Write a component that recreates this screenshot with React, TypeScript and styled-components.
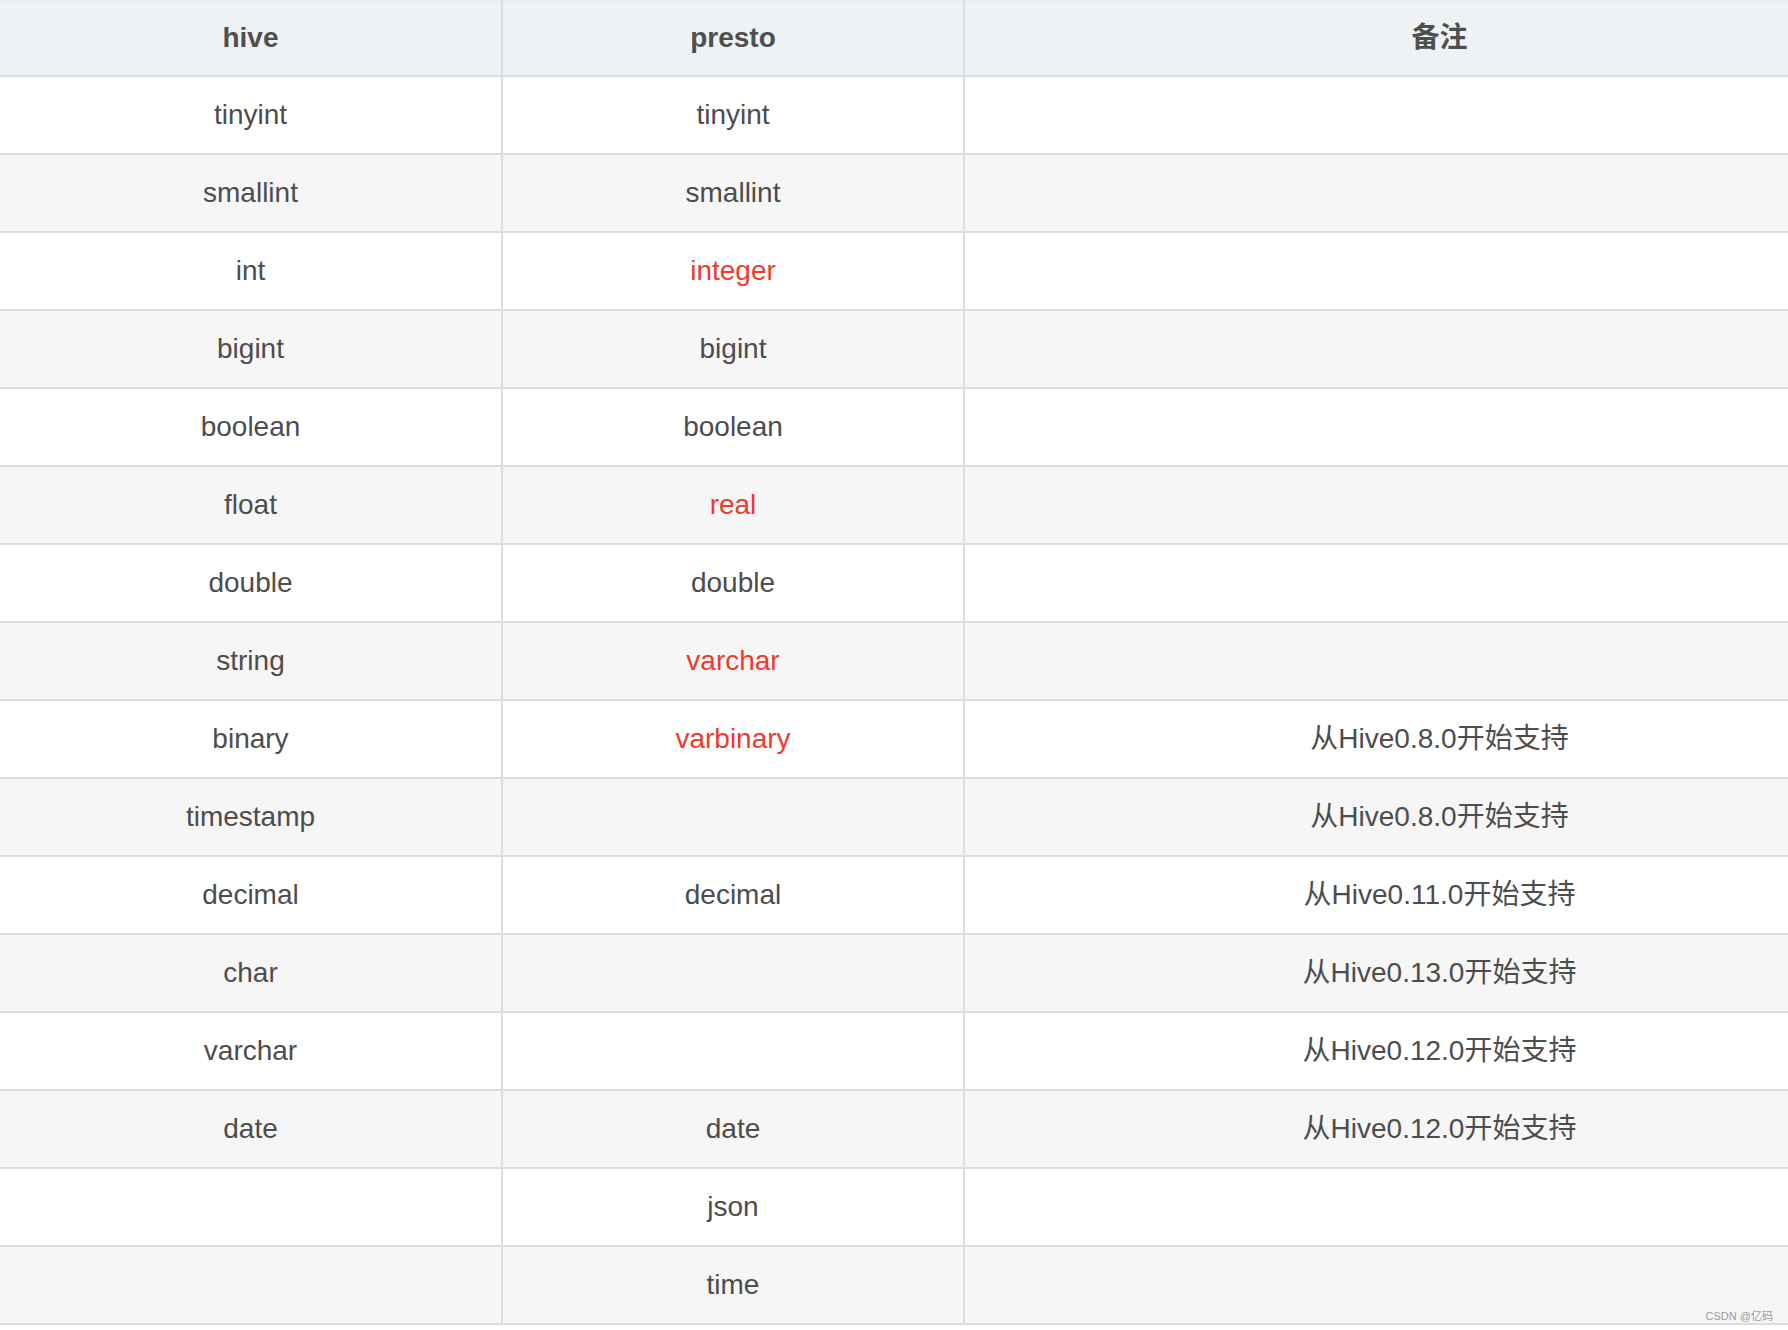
import React from "react";
import styled, { createGlobalStyle } from "styled-components";

const Global = createGlobalStyle`
  html, body { margin: 0; padding: 0; background: #fff; }
  body { font-family: "Liberation Sans", Arial, "Noto Sans CJK SC", sans-serif; }
`;

const Page = styled.div`
  position: relative;
  width: 1788px;
  height: 1330px;
  background: #fff;
  overflow: hidden;
`;

const Table = styled.table`
  border-collapse: collapse;
  table-layout: fixed;
  width: 1916px;
  font-size: 28px;
  line-height: 28px;
  color: #4d4d4d;
`;

const HeadCell = styled.th`
  height: 75px;
  padding: 0;
  background: #eef2f5;
  box-shadow: inset 0 3px 3px -2px rgba(0, 0, 0, 0.04);
  font-weight: bold;
  color: #4f4f4f;
  text-align: center;
  border-right: 2px solid #dddddd;
  border-bottom: 2px solid #dddddd;
  font-family: "Liberation Sans", Arial, "Noto Sans CJK SC", sans-serif;
`;

const Row = styled.tr<{ $alt: boolean }>`
  background: ${(p) => (p.$alt ? "#f6f6f6" : "#ffffff")};
`;

const Cell = styled.td<{ $red?: boolean }>`
  height: 76px;
  padding: 0;
  text-align: center;
  vertical-align: middle;
  color: ${(p) => (p.$red ? "#f03a2e" : "#4d4d4d")};
  border-right: 2px solid #dddddd;
  border-bottom: 2px solid #dddddd;
  font-family: "Liberation Sans", Arial, "Noto Sans CJK SC", sans-serif;
  white-space: nowrap;
`;

const Watermark = styled.div`
  position: absolute;
  right: 15px;
  bottom: 7px;
  font-size: 11px;
  color: #9a9a9a;
  font-family: "Liberation Sans", Arial, "Noto Sans CJK SC", sans-serif;
`;

type R = { hive: string; presto: string; red?: boolean; note: string };

const rows: R[] = [
  { hive: "tinyint", presto: "tinyint", note: "" },
  { hive: "smallint", presto: "smallint", note: "" },
  { hive: "int", presto: "integer", red: true, note: "" },
  { hive: "bigint", presto: "bigint", note: "" },
  { hive: "boolean", presto: "boolean", note: "" },
  { hive: "float", presto: "real", red: true, note: "" },
  { hive: "double", presto: "double", note: "" },
  { hive: "string", presto: "varchar", red: true, note: "" },
  { hive: "binary", presto: "varbinary", red: true, note: "从Hive0.8.0开始支持" },
  { hive: "timestamp", presto: "", note: "从Hive0.8.0开始支持" },
  { hive: "decimal", presto: "decimal", note: "从Hive0.11.0开始支持" },
  { hive: "char", presto: "", note: "从Hive0.13.0开始支持" },
  { hive: "varchar", presto: "", note: "从Hive0.12.0开始支持" },
  { hive: "date", presto: "date", note: "从Hive0.12.0开始支持" },
  { hive: "", presto: "json", note: "" },
  { hive: "", presto: "time", note: "" },
];

export default function App() {
  return (
    <Page>
      <Global />
      <Table>
        <colgroup>
          <col style={{ width: 502 }} />
          <col style={{ width: 462 }} />
          <col />
        </colgroup>
        <thead>
          <tr>
            <HeadCell>hive</HeadCell>
            <HeadCell>presto</HeadCell>
            <HeadCell>备注</HeadCell>
          </tr>
        </thead>
        <tbody>
          {rows.map((r, i) => (
            <Row key={i} $alt={i % 2 === 1}>
              <Cell>{r.hive}</Cell>
              <Cell $red={r.red}>{r.presto}</Cell>
              <Cell>{r.note}</Cell>
            </Row>
          ))}
        </tbody>
      </Table>
      <Watermark>CSDN @亿码</Watermark>
    </Page>
  );
}
